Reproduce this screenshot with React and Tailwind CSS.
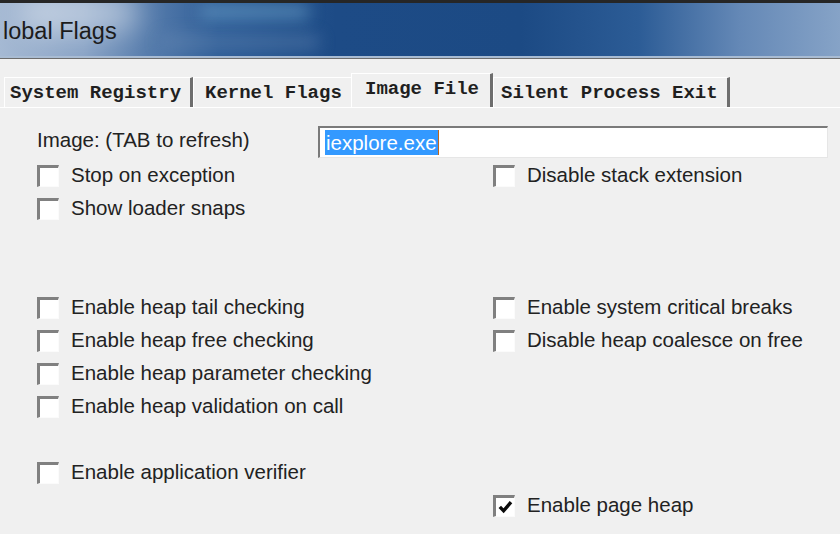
import React from 'react';

const rows = [
  ['Stop on exception', 'Disable stack extension'],
  ['Show loader snaps', null],
  [null, null],
  [null, null],
  ['Enable heap tail checking', 'Enable system critical breaks'],
  ['Enable heap free checking', 'Disable heap coalesce on free'],
  ['Enable heap parameter checking', null],
  ['Enable heap validation on call', null],
  [null, null],
  ['Enable application verifier', null],
  [null, 'Enable page heap'],
];

function Check({ label, checked }) {
  if (!label) return <div />;
  return (
    <div className="flex items-center gap-[12px]">
      <div className="w-[22px] h-[22px] bg-white border-t-[3px] border-l-[3px] border-r border-b border-t-[#808080] border-l-[#808080] border-r-[#fbfbfb] border-b-[#fbfbfb] flex items-center justify-center">
        {checked && (
          <svg width="15" height="14" viewBox="0 0 15 14">
            <path d="M1.8 6.8 L5.6 10.8 L13 2.2" fill="none" stroke="#0a0a0a" strokeWidth="3.4" />
          </svg>
        )}
      </div>
      <span className="text-[20.5px] text-[#222] leading-none">{label}</span>
    </div>
  );
}

function Tab({ children, className }) {
  return (
    <div className={`flex items-center bg-[#f0f0f0] border-t border-l border-t-white border-l-white text-[19px] font-bold text-[#1f1f1f] whitespace-pre ${className}`}>
      {children}
    </div>
  );
}

export default function App() {
  return (
    <div className="w-[840px] h-[534px] bg-[#f0f0f0] overflow-hidden font-['Liberation_Sans',Arial,sans-serif]">
      {/* title bar */}
      <div className="h-[3px] bg-[#262626]" />
      <div className="relative h-[53px] overflow-hidden bg-[linear-gradient(to_right,#a5b9d3_0%,#8aa4c6_10%,#5a7fae_17%,#2e5d97_26%,#1d4b86_40%,#1c4a84_62%,#2c5c96_76%,#6488b6_88%,#86a3c7_100%)]">
        <div className="absolute left-[20px] top-[-10px] w-[120px] h-[40px] rounded-full bg-white/40 blur-[14px]" />
        <div className="absolute left-[200px] top-[2px] w-[110px] h-[14px] rounded-full bg-[#7fb6d8]/50 blur-[8px]" />
        <div className="absolute left-[160px] top-[32px] w-[160px] h-[14px] rounded-full bg-[#6f8fb6]/40 blur-[8px]" />
        <div className="relative flex items-center h-full pt-[4px] pl-[3px] text-[23.5px] text-[#1c1c1c] whitespace-nowrap">
          lobal Flags
        </div>
      </div>
      <div className="h-[2px] bg-[#a9bcd3]" />
      <div className="h-[1px] bg-[#6d6d6d]" />

      {/* tabs */}
      <div className="flex items-end h-[48px] pl-[4px] font-['Liberation_Mono','Courier_New',monospace]">
        <Tab className="h-[30px] w-[189px] pl-[5px] pt-[2px] border-r-[3px] border-r-[#6e6e6e]">System Registry</Tab>
        <Tab className="h-[30px] w-[158px] pl-[11px] pt-[2px]">Kernel Flags</Tab>
        <Tab className="h-[34px] w-[142px] pl-[13px] pb-[3px] border-r-[3px] border-r-[#6e6e6e]">Image File</Tab>
        <Tab className="h-[30px] w-[237px] pl-[7px] pt-[2px] border-r-[3px] border-r-[#6e6e6e]">Silent Process Exit</Tab>
      </div>

      {/* panel */}
      <div className="border-t border-t-white pl-[37px]">
        <div className="flex items-center mt-[18px] h-[32px]">
          <div className="w-[281px] text-[20.5px] text-[#222] leading-none pb-[3px]">Image: (TAB to refresh)</div>
          <div className="w-[510px] h-[32px] bg-white border-t-2 border-l-2 border-r border-b border-t-[#7a7a7a] border-l-[#7a7a7a] border-r-[#e6e6e6] border-b-[#e6e6e6] flex items-center pl-[5px]">
            <span className="bg-[#3399ff] text-white text-[20.5px] leading-[25px] px-[1px]">iexplore.exe</span>
            <span className="w-[1px] h-[25px] bg-[#c0661a]" />
          </div>
        </div>
        <div className="mt-[1px]">
          {rows.map(([l, r], i) => (
            <div key={i} className="grid grid-cols-[456px_1fr] items-center h-[33px]">
              <Check label={l} />
              <Check label={r} checked={r === 'Enable page heap'} />
            </div>
          ))}
        </div>
      </div>
    </div>
  );
}
